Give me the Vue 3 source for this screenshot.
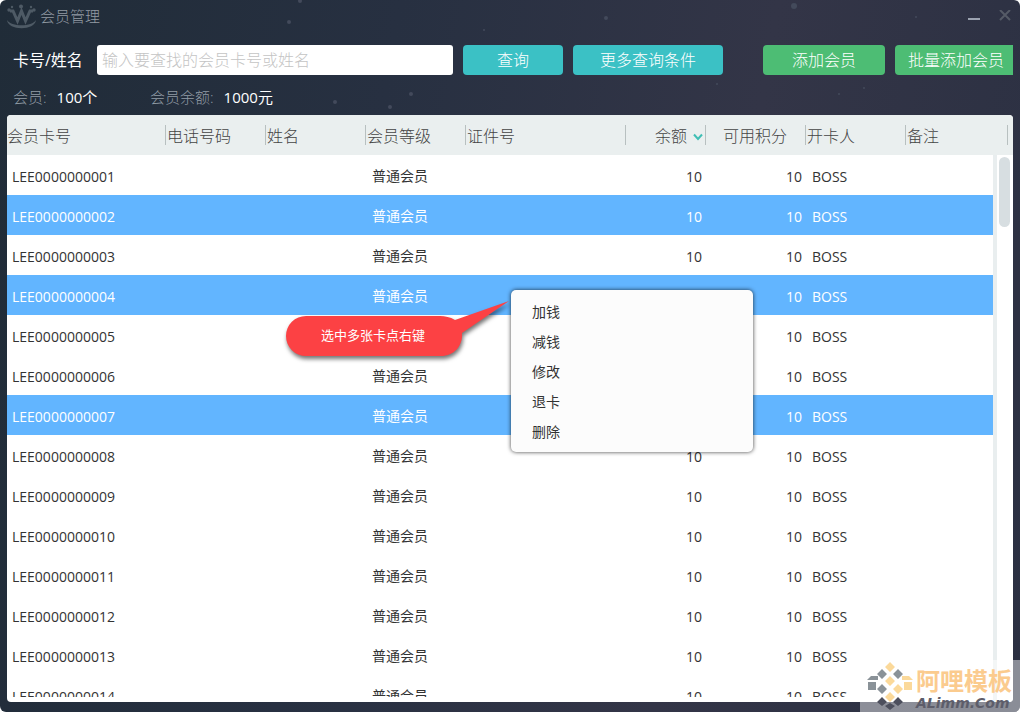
<script setup>
import { ref } from 'vue'

const keyword = ref('')
const columns = [
  { key: 'card', label: '会员卡号' },
  { key: 'phone', label: '电话号码' },
  { key: 'name', label: '姓名' },
  { key: 'level', label: '会员等级' },
  { key: 'idno', label: '证件号' },
  { key: 'balance', label: '余额', sorted: true },
  { key: 'points', label: '可用积分' },
  { key: 'issuer', label: '开卡人' },
  { key: 'remark', label: '备注' },
]
const rows = Array.from({ length: 14 }, (_, i) => ({
  card: 'LEE' + String(i + 1).padStart(10, '0'),
  phone: '',
  name: '',
  level: '普通会员',
  idno: '',
  balance: 10,
  points: 10,
  issuer: 'BOSS',
  remark: '',
}))
const selected = ref([1, 3, 6])
const menu = ['加钱', '减钱', '修改', '退卡', '删除']
const stars = [
  [606, 18, 2], [484, 30, 1], [411, 94, 2], [390, 107, 2], [794, 6, 3], [916, 17, 1],
  [289, 22, 2], [300, 1, 2], [335, 102, 2], [839, 94, 1], [864, 88, 1], [717, 84, 1],
]
</script>

<template>
  <main class="window">
    <svg class="stars" aria-hidden="true">
      <circle v-for="(s, i) in stars" :key="i" :cx="s[0]" :cy="s[1]" :r="s[2]" />
    </svg>

    <header class="titlebar">
      <svg class="logo" viewBox="0 0 30 26" aria-hidden="true">
        <circle cx="2" cy="7" r="1.7" /><circle cx="14" cy="3.5" r="2" /><circle cx="27" cy="7" r="1.7" />
        <circle cx="5" cy="4" r="1.2" /><circle cx="24" cy="4" r="1.2" />
        <path class="line" d="M3 8H6L10.5 18 14.5 8 18.5 18 23 8H26" />
        <path d="M0 17C1 28 28 28 29 17C25 24 4 24 0 17Z" />
      </svg>
      <h1>会员管理</h1>
      <button class="win-btn" aria-label="最小化"><svg viewBox="0 0 12 12"><path d="M0 9H12" stroke-width="2" /></svg></button>
      <button class="win-btn close" aria-label="关闭"><svg viewBox="0 0 12 12"><path d="M1 0 11 10M11 0 1 10" stroke-width="2" /></svg></button>
    </header>

    <form class="toolbar" @submit.prevent>
      <label for="kw">卡号/姓名</label>
      <input id="kw" v-model="keyword" type="text" placeholder="输入要查找的会员卡号或姓名" />
      <button class="btn query" type="submit">查询</button>
      <button class="btn more" type="button">更多查询条件</button>
      <button class="btn add" type="button">添加会员</button>
      <button class="btn batch" type="button">批量添加会员</button>
    </form>

    <dl class="stats">
      <div class="count"><dt>会员:</dt><dd>100个</dd></div>
      <div><dt>会员余额:</dt><dd>1000元</dd></div>
    </dl>

    <section class="panel">
      <div class="viewport">
        <table>
          <colgroup><col v-for="c in columns" :key="c.key" :class="'col-' + c.key" /></colgroup>
          <thead>
            <tr>
              <th v-for="c in columns" :key="c.key" :class="c.key" scope="col">
                {{ c.label }}<svg v-if="c.sorted" class="chevron" viewBox="0 0 10 8"><path d="M1 1.5 5 6 9 1.5" /></svg>
              </th>
            </tr>
          </thead>
          <tbody>
            <tr v-for="(r, i) in rows" :key="r.card" :class="{ selected: selected.includes(i) }">
              <td v-for="c in columns" :key="c.key" :class="c.key">{{ r[c.key] }}</td>
            </tr>
          </tbody>
        </table>
      </div>
      <div class="scroll"><div class="thumb"></div></div>
    </section>

    <div class="callout">
      <svg viewBox="0 0 230 70" aria-hidden="true">
        <path d="M24 19H158C163 19 168 20 173 23L227 4 180 36C181 49 172 59 159 59H24A20 20 0 0 1 24 19Z" />
      </svg>
      <span>选中多张卡点右键</span>
    </div>

    <menu class="context">
      <li v-for="m in menu" :key="m"><button type="button">{{ m }}</button></li>
    </menu>

    <aside class="watermark">
      <svg viewBox="0 0 48 48" aria-hidden="true">
        <g class="gold">
          <path d="M24 0l5 5-5 5-5-5zM24 14l5 5-5 5-5-5zM32 22l5 5-5 5-5-5zM24 30l5 5-5 5-5-5zM36 14h7l4 4H36zM38 20h8v8h-8z" />
        </g>
        <g class="gray">
          <path d="M16 7l5 5-5 5-5-5zM32 7l5 5-5 5-5-5zM16 22l5 5-5 5-5-5zM5 14h7v4H1zM2 20h8v8H2z" />
        </g>
        <g class="dark">
          <path d="M16 35l5 5-5 4-5-4zM32 35l5 5-5 4-5-4zM24 41l5 3-5 4-5-4z" />
        </g>
      </svg>
      <p><strong>阿哩模板</strong><em>ALimm.Com</em></p>
    </aside>
  </main>
</template>

<style>
body {
  margin: 0;
  background: #fff;
}
</style>

<style scoped>
* {
  box-sizing: border-box;
}
.window {
  position: relative;
  display: flex;
  flex-direction: column;
  height: 100vh;
  padding: 0 7px 10px;
  overflow: hidden;
  border-radius: 6px;
  background: linear-gradient(100deg, #202c38 0%, #273041 35%, #333547 68%, #2b3042 100%);
  font-family: "Open Sans", "Noto Sans CJK SC", sans-serif;
  font-size: 14px;
  color: #fff;
}
button,
input {
  font: inherit;
  border: 0;
}
.stars {
  position: absolute;
  inset: 0;
  width: 100%;
  height: 120px;
  fill: #434a5b;
}
.titlebar,
.toolbar,
.stats {
  position: relative;
  display: flex;
  align-items: center;
}
.titlebar {
  height: 32px;
}
.logo {
  width: 30px;
  height: 26px;
  fill: #4e5a65;
}
.logo .line {
  fill: none;
  stroke: #4e5a65;
  stroke-width: 3;
}
h1 {
  flex: 1;
  margin: 0 0 0 3px;
  font-size: 15px;
  font-weight: 300;
  line-height: 20px;
  color: #939ba4;
}
.win-btn {
  width: 16px;
  height: 24px;
  margin-right: 15px;
  padding: 0;
  background: none;
}
.win-btn svg {
  display: block;
  width: 12px;
  height: 12px;
  margin: auto;
  stroke: #9ba2b0;
  fill: none;
}
.win-btn.close {
  margin-right: 0;
}
.close svg {
  stroke: #555b66;
}
.toolbar {
  height: 56px;
}
.toolbar label {
  width: 90px;
  padding-left: 6px;
  font-size: 16px;
  line-height: 24px;
  white-space: nowrap;
}
.toolbar input {
  flex: 1;
  min-width: 0;
  height: 30px;
  padding: 0 5px;
  border-radius: 3px;
  background: #fff;
  font-size: 16px;
  font-weight: 300;
  color: #333;
}
.toolbar input::placeholder {
  color: #c4c4c4;
  opacity: 1;
}
.btn {
  height: 30px;
  margin-left: 10px;
  padding: 0 0 2px;
  border-radius: 4px;
  font-size: 16px;
  font-weight: 300;
  color: #fff;
  background: #3bc1c5;
}
.query {
  width: 100px;
}
.more {
  width: 150px;
}
.add {
  width: 122px;
  margin-left: 40px;
  background: #4dbd74;
}
.batch {
  width: 118px;
  padding-left: 4px;
  border-radius: 4px 0 0 4px;
  background: #4dbd74;
}
.stats {
  height: 27px;
  margin: 0;
  padding: 0 6px 8px;
  font-size: 15px;
  line-height: 19px;
}
.stats div {
  display: flex;
  gap: 10px;
}
.stats .count {
  width: 137px;
}
dt {
  font-weight: 300;
  color: #929ca6;
}
dd {
  margin: 0;
}
.panel {
  position: relative;
  flex: 1;
  min-height: 0;
  padding-bottom: 5px;
  overflow: hidden;
  border-radius: 4px;
  background: #fff;
}
.viewport {
  height: 100%;
  overflow: hidden;
}
table {
  width: 100%;
  table-layout: fixed;
  border-collapse: collapse;
  color: #333;
}
.col-card {
  width: 158px;
}
.col-phone,
.col-name,
.col-level,
.col-points,
.col-issuer {
  width: 100px;
}
.col-idno {
  width: 160px;
}
.col-balance {
  width: 80px;
}
th,
td {
  height: 40px;
  padding: 0 3px 0 7px;
  text-align: left;
  white-space: nowrap;
}
td {
  padding-top: 2px;
}
td.level {
  padding-top: 0;
}
th {
  padding-left: 2px;
  background: linear-gradient(#b8c0c0, #b8c0c0) 0 50% / 1px 20px no-repeat #eaefef;
  font-size: 16px;
  font-weight: 300;
  color: #444;
}
th.card {
  padding-left: 0;
  background: #eaefef;
}
td.card {
  padding-left: 5px;
}
th.remark {
  background:
    linear-gradient(#b8c0c0, #b8c0c0) 0 50% / 1px 20px no-repeat,
    linear-gradient(#b8c0c0, #b8c0c0) right 5px center / 1px 20px no-repeat,
    #eaefef;
}
.balance,
.points {
  text-align: right;
}
th.balance {
  padding-right: 2px;
}
th.points {
  padding-right: 18px;
}
.chevron {
  width: 10px;
  height: 8px;
  margin-left: 6px;
  vertical-align: 1px;
  fill: none;
  stroke: #3fbfb5;
  stroke-width: 2;
}
tr.selected {
  background: #62b5ff;
  color: #fff;
}
.scroll {
  position: absolute;
  top: 40px;
  right: 0;
  bottom: 0;
  width: 20px;
  padding: 2px 3px 0 2px;
  border-left: 4px solid #e9eeef;
  background: #fff;
}
.thumb {
  height: 70px;
  border-radius: 6px;
  background: #d7dee1;
}
.callout {
  position: absolute;
  left: 282px;
  top: 297px;
  width: 230px;
  height: 70px;
}
.callout svg {
  display: block;
  width: 100%;
  height: 100%;
  overflow: visible;
  fill: #fc4144;
  filter: drop-shadow(1px 3px 2px rgba(0, 0, 0, 0.55));
}
.callout span {
  position: absolute;
  left: 39px;
  top: 28px;
  font-size: 13px;
  line-height: 20px;
}
.context {
  position: absolute;
  left: 511px;
  top: 290px;
  width: 242px;
  margin: 0;
  padding: 6px;
  list-style: none;
  border-radius: 5px;
  background: #fcfcfc;
  box-shadow: 0 0 4px rgba(0, 0, 0, 0.75);
}
.context button {
  display: block;
  width: 100%;
  height: 30px;
  padding: 0 15px;
  text-align: left;
  color: #333;
  background: none;
}
.watermark {
  position: absolute;
  right: 0;
  bottom: 0;
  display: flex;
  width: 160px;
  height: 52px;
  padding: 2px 0 0 6px;
  background: rgba(255, 255, 255, 0.45);
}
.watermark svg {
  width: 48px;
  height: 48px;
}
.watermark p {
  margin: 5px 0 0 2px;
}
.watermark strong,
.watermark em {
  display: block;
}
.watermark strong {
  font-size: 24px;
  line-height: 28px;
  color: #fbcb8e;
}
.watermark em {
  font: italic bold 14px/16px "DejaVu Sans", sans-serif;
  color: #5d5d6a;
}
.gold {
  fill: #fbd99a;
}
.gray {
  fill: #8a9298;
}
.dark {
  fill: #4d4f5d;
}
</style>
